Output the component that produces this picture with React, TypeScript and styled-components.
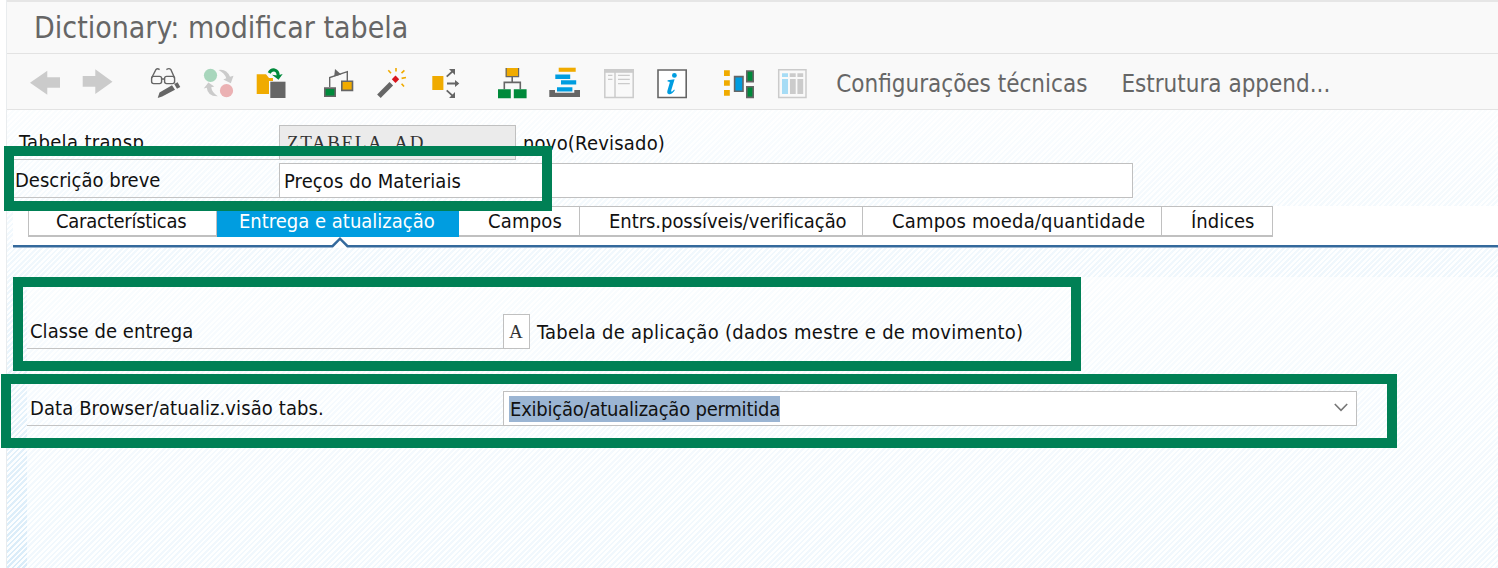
import React from 'react';
import styled, { createGlobalStyle, css } from 'styled-components';

const GlobalStyle = createGlobalStyle`
  * { box-sizing: border-box; }
  body { margin: 0; background: #fff; overflow: hidden; }
`;

const Screen = styled.div`
  position: relative;
  width: 1498px;
  height: 568px;
  padding-left: 6px;
  overflow: hidden;
  background: #fff;
  color: #111;
  font: 20px/24px 'DejaVu Sans Condensed', 'DejaVu Sans', sans-serif;
`;

const Window = styled.main`
  display: flex;
  flex-direction: column;
  height: 100%;
  border-left: 1px solid #e9ecee;
`;

const TitleBar = styled.header`
  display: flex;
  align-items: center;
  height: 54px;
  padding-left: 27px;
  border-top: 2px solid #e6e6e6;
  border-bottom: 1px solid #e3e3e3;
  background: #f9f9f9;
`;

const Title = styled.h1`
  margin: 0;
  color: #666;
  font-size: 30px;
  font-weight: normal;
  line-height: 36px;
`;

const Toolbar = styled.nav`
  display: flex;
  align-items: center;
  height: 56px;
  padding: 5px 0 0 22px;
  border-bottom: 1px solid #e3e3e3;
  background: #f9f9f9;
`;

const IconGroup = styled.div<{ $gap?: number; $after: number }>`
  display: flex;
  gap: ${p => p.$gap ?? 21}px;
  margin-right: ${p => p.$after}px;
`;

const Icon = styled.svg`
  display: block;
  width: 32px;
  height: 32px;
  margin-top: -3px;
`;

const ToolbarText = styled.button`
  margin-right: 22px;
  padding: 0 0 0 12px;
  border: 0;
  background: none;
  color: #666;
  font: inherit;
  font-size: 24px;
  line-height: 30px;
  white-space: nowrap;
`;

const Body = styled.section`
  flex: 1;
  display: flex;
  flex-direction: column;
  background:
    linear-gradient(to bottom, rgba(255, 255, 255, 0.88) 0%, rgba(255, 255, 255, 0.62) 32%, rgba(255, 255, 255, 0) 100%),
    repeating-linear-gradient(135deg, #d9ecf9 0 1.9px, #fcfeff 1.9px 3.8px);
`;

const HeaderFields = styled.div`
  display: flex;
  flex-direction: column;
  gap: 3px;
  padding: 15px 0 0 7px;
`;

const FieldRow = styled.div`
  display: flex;
  align-items: center;
  height: 35px;
`;

const Label = styled.label<{ $width: number; $indent?: number; $track?: number }>`
  display: flex;
  align-items: center;
  width: ${p => p.$width}px;
  height: 100%;
  padding-left: ${p => p.$indent ?? 3}px;
  border-bottom: 1px solid #c4c4c4;
  letter-spacing: ${p => p.$track ?? 0}px;
  white-space: nowrap;
`;

const boxed = css`
  display: flex;
  align-items: center;
  height: 100%;
  border: 1px solid #c0c0c0;
  background: #fff;
  white-space: nowrap;
`;

const TextField = styled.div<{ $width: number }>`
  ${boxed}
  width: ${p => p.$width}px;
  padding-left: 4px;
  letter-spacing: 0.1px;
`;

const CodeField = styled(TextField)<{ $readOnly?: boolean }>`
  padding-left: ${p => (p.$readOnly ? 7 : 5)}px;
  background: ${p => (p.$readOnly ? '#ebebeb' : '#fff')};
  color: #333;
  font-family: 'Liberation Serif', serif;
  font-size: 19px;
  letter-spacing: 1.6px;
`;

const Note = styled.span<{ $track: number }>`
  margin-left: 7px;
  letter-spacing: ${p => p.$track}px;
  white-space: nowrap;
`;

const TabArea = styled.div`
  display: flex;
  flex-direction: column;
  height: 42px;
  margin: 8px 0 0 6px;
  background: #fff;
`;

const TabList = styled.div`
  display: flex;
  width: 1245px;
  height: 31px;
  margin-left: 15px;
  border: 1px solid #c0c0c0;
  border-bottom-width: 2px;
`;

const Tab = styled.button<{ $width: number; $active?: boolean; $track?: number; $indent?: number }>`
  flex: none;
  width: ${p => p.$width}px;
  height: ${p => (p.$active ? 31 : 28)}px;
  margin-top: ${p => (p.$active ? -1 : 0)}px;
  padding: 0 0 ${p => (p.$active ? 2 : 0)}px ${p => p.$indent ?? 29}px;
  border: 0;
  border-right: ${p => (p.$active ? 0 : 1)}px solid #c0c0c0;
  background: ${p => (p.$active ? '#009de0' : '#fff')};
  color: ${p => (p.$active ? '#fff' : '#111')};
  font: inherit;
  letter-spacing: ${p => p.$track ?? 0}px;
  text-align: left;
  white-space: nowrap;

  &:last-child { border-right: 0; }
`;

const TabRule = styled.svg`
  display: block;
  flex: none;
  width: 1485px;
  height: 12px;
  margin-top: -1px;
`;

const Panel = styled.div`
  flex: 1;
  display: flex;
  flex-direction: column;
  gap: 42px;
  margin: 29px 0 0 20px;
  padding-top: 37px;
  background: rgba(255, 255, 255, 0.62);
`;

const Select = styled.div`
  ${boxed}
  justify-content: space-between;
  width: 854px;
  padding: 0 8px 0 5px;
`;

const Selected = styled.span`
  height: 26px;
  padding: 0 0 0 1px;
  background: #9bb5d3;
  line-height: 26px;
  letter-spacing: -0.22px;
`;

const Chevron = styled.svg`
  width: 14px;
  height: 9px;
  margin-top: -3px;
`;

/* Marker frames laid over the form */
const Frame = styled.div<{ $x: number; $y: number; $w: number; $h: number }>`
  position: absolute;
  left: ${p => p.$x}px;
  top: ${p => p.$y}px;
  width: ${p => p.$w}px;
  height: ${p => p.$h}px;
  border: 10.5px solid #008055;
  pointer-events: none;
`;

const GRAY = '#666';
const PALE = '#cbcbcb';
const ORANGE = '#f0ab00';
const GREEN = '#008a3b';
const BLUE = '#009de0';

const BackIcon = () => (
  <Icon viewBox="0 0 32 32"><path fill={PALE} d="M1 15.7 18.3 3.7V10.3H31V20.7H18.3V27.7z" /></Icon>
);

const ForwardIcon = () => (
  <Icon viewBox="0 0 32 32"><path fill={PALE} d="M30.5 14.7 13.3 2.3V9H.7V19.7H13.3V27z" /></Icon>
);

const DisplayChangeIcon = () => (
  <Icon viewBox="0 0 32 32" fill="none" stroke={GRAY}>
    <g strokeWidth="1.4">
      <rect x="2.6" y="9.4" width="10" height="7.2" rx="2" />
      <rect x="15.6" y="9.4" width="10" height="7.2" rx="2" />
      <path d="M12.6 12h3M2.6 11 7 2.4Q8.5.8 10.6 2.6M25.6 11 21.8 2.4Q20 .8 17.4 2.6" />
    </g>
    <path fill={GRAY} stroke="none" d="M8.7 31 10.5 25.6 23 18.3 26 22.8 13.2 29.6zM25.2 17 28.6 15.2 31.3 20 28 21.7z" />
  </Icon>
);

const ActivateIcon = () => (
  <Icon viewBox="0 0 32 32">
    <circle cx="8.5" cy="8.3" r="6.6" fill="#a8d6bc" />
    <circle cx="24.5" cy="23.7" r="6.6" fill="#ebb1b3" />
    <path fill={PALE} d="M16.5 3Q24.5 1.5 28 9.8L31.5 8.8 28.8 16.3 21.3 12.4 24.3 11.2Q22.5 6 16.5 3zM15.8 29.2Q5.5 29.5 4.8 20.8L1.7 21.4 6.4 15.5 12.3 19.4 9.2 20.2Q10 25.5 15.8 29.2z" />
  </Icon>
);

const CopyIcon = () => (
  <Icon viewBox="0 0 32 32">
    <path fill={ORANGE} d="M1.7 7.3H11L14 11H18V14H14V27H1.7z" />
    <path fill={GRAY} d="M15.3 14.7H30.5V31H15.3z" />
    <path fill="none" stroke={GREEN} strokeWidth="3.2" d="M14.2 6Q16 2.5 19.5 3 23.2 3.8 23.2 9" />
    <path fill={GREEN} d="M17 7.8 22.5 8.4 27.7 7 23.5 12.8z" />
  </Icon>
);

const WhereUsedIcon = () => (
  <Icon viewBox="0 0 32 32">
    <path fill="none" stroke={GRAY} strokeWidth="1.4" d="M6.7 20V10.5L24.3 4.6V14" />
    <path fill={GRAY} d="M12 2 18.2 7.5 11.2 9.5z" />
    <path fill={GREEN} stroke={GRAY} strokeWidth="1.6" d="M1.8 21.1H12.2V29.3H1.8z" />
    <path fill={ORANGE} stroke={GRAY} strokeWidth="1.6" d="M18.8 14.2H29.5V23.4H18.8z" />
  </Icon>
);

const WandIcon = () => (
  <Icon viewBox="0 0 32 32">
    <path stroke={GRAY} strokeWidth="5" d="M2.9 29.3 15.3 16.8" />
    <path fill="#d9151c" d="M19.5 8.6 23.2 12.3 19.5 16 15.8 12.3z" />
    <path fill="none" stroke={ORANGE} strokeWidth="1.6" d="M20 1V4.5M12.3 3.3 15 6.2M28.4 3.4 25.5 6.2M25.6 11.4 30 10.5M25.6 16.7 28 19.6" />
  </Icon>
);

const SplitIcon = () => (
  <Icon viewBox="0 0 32 32">
    <path fill={ORANGE} d="M3.3 9H14.4V23H3.3z" />
    <path fill="none" stroke={GRAY} strokeWidth="1.8" d="M17.7 9.7 24.5 3.5M18 16.5H29M17.7 23.3 24.5 29.7" />
    <path fill={GRAY} d="M20 2H26V8zM26 13 30.3 16.5 26 20zM26 25V31H20z" />
  </Icon>
);

const HierarchyIcon = () => (
  <Icon viewBox="0 0 32 32">
    <path fill="none" stroke={GRAY} strokeWidth="1.6" d="M16.2 10V15.4M8.3 22.3V15.4H24.3V22.3" />
    <path fill={ORANGE} d="M9.8 1H22.8V10H9.8z" />
    <path fill="none" stroke={GRAY} strokeWidth="1.2" d="M10.2 1V9.6H22.6V1" />
    <path fill={GREEN} d="M2 22.3H14.8V31.3H2zM17.8 22.3H30.6V31.3H17.8z" />
  </Icon>
);

const StackIcon = () => (
  <Icon viewBox="0 0 32 32">
    <path fill={ORANGE} d="M9.7.7H26.7V4.8H9.7z" />
    <path fill={BLUE} d="M6.3 7.6H21.2V11.9H6.3zM12 13.3H27.2V17.5H12zM8 20.2H23.4V24.6H8z" />
    <path fill={GRAY} d="M.3 23H6V25.7H25.3V23H31V30H.3z" />
  </Icon>
);

const FieldLabelsIcon = () => (
  <Icon viewBox="0 0 32 32" fill="none" stroke={PALE}>
    <path strokeWidth="1.5" d="M1.8 2.7H30.2V30.6H1.8zM12 5V30.5" />
    <path fill={PALE} stroke="none" d="M1 2H31V5.8H1z" />
    <path strokeWidth="1.2" d="M5 8.4H9.4M5 12.4H9.4M15 8.4H26.8M15 12.4H26.8M15 16.6H26.8" />
  </Icon>
);

const InfoIcon = () => (
  <Icon viewBox="0 0 32 32">
    <path fill="#fff" stroke={GRAY} strokeWidth="1.6" d="M2 3H30.2V30.5H2z" />
    <circle cx="18.4" cy="8.4" r="2.4" fill={BLUE} />
    <path fill={BLUE} d="M11.6 13.2 18.6 12.2 15.2 23.6Q15 25.2 16.2 24.6L18.2 22.6 18.8 23.2Q16 27.6 13 27.3 10.7 26.8 11.4 23.8L13.8 15.6Q14 14.4 11.6 14.4z" />
  </Icon>
);

const AppendIcon = () => (
  <Icon viewBox="0 0 32 32">
    <path fill={ORANGE} d="M2 3.3H7.8V9H2zM2 13.2H7.8V18.8H2zM2 23H7.8V28.7H2z" />
    <path fill={BLUE} stroke={GRAY} strokeWidth="1.6" d="M12.6 9.6H21V24.2H12.6z" />
    <path fill={GREEN} stroke={GRAY} strokeWidth="1.6" d="M24.8 4H31.2V14.6H24.8zM24.8 19.8H31.2V30.4H24.8z" />
  </Icon>
);

const ColumnsIcon = () => (
  <Icon viewBox="0 0 32 32">
    <path fill="none" stroke={PALE} strokeWidth="1.5" d="M2.7 2.7H30V30.6H2.7z" />
    <path fill="#a6dcf5" d="M6 6.2H12V10H6zM6 12H12V27H6z" />
    <path fill={PALE} d="M13.7 6.2H19.7V10H13.7zM14 12H19.7V27H14zM21.4 6.2H27.2V10H21.4zM21.4 12H27.2V27H21.4z" />
  </Icon>
);

export default function App() {
  return (
    <>
      <GlobalStyle />
      <Screen>
        <Window>
          <TitleBar><Title>Dictionary: modificar tabela</Title></TitleBar>
          <Toolbar>
            <IconGroup $after={35}><BackIcon /><ForwardIcon /></IconGroup>
            <IconGroup $after={36}><DisplayChangeIcon /><ActivateIcon /><CopyIcon /></IconGroup>
            <IconGroup $after={35}><WhereUsedIcon /><WandIcon /><SplitIcon /></IconGroup>
            <IconGroup $gap={21.4} $after={34}><HierarchyIcon /><StackIcon /><FieldLabelsIcon /><InfoIcon /></IconGroup>
            <IconGroup $gap={22} $after={16}><AppendIcon /><ColumnsIcon /></IconGroup>
            <ToolbarText>Configurações técnicas</ToolbarText>
            <ToolbarText>Estrutura append...</ToolbarText>
          </Toolbar>
          <Body>
            <HeaderFields>
              <FieldRow>
                <Label $width={265} $indent={5} $track={0.35}>Tabela transp.</Label>
                <CodeField $width={237} $readOnly>ZTABELA_AD</CodeField>
                <Note $track={0.2}>novo(Revisado)</Note>
              </FieldRow>
              <FieldRow>
                <Label $width={265} $indent={1}>Descrição breve</Label>
                <TextField $width={854}>Preços do Materiais</TextField>
              </FieldRow>
            </HeaderFields>
            <TabArea>
              <TabList role="tablist">
                <Tab $width={188} $indent={27} $track={-0.25}>Características</Tab>
                <Tab $width={242} $indent={22} $active>Entrega e atualização</Tab>
                <Tab $width={121} $indent={29} $track={0.2}>Campos</Tab>
                <Tab $width={283} $track={-0.05}>Entrs.possíveis/verificação</Tab>
                <Tab $width={299} $track={0.18}>Campos moeda/quantidade</Tab>
                <Tab $width={110}>Índices</Tab>
              </TabList>
              <TabRule viewBox="0 0 1485 12">
                <path fill="none" stroke="#34699c" strokeWidth="2.4" d="M0 10.2H319.5L327 2.6 334.5 10.2H1485" />
              </TabRule>
            </TabArea>
            <Panel>
              <FieldRow>
                <Label $width={476} $track={0.05}>Classe de entrega</Label>
                <CodeField $width={27}>A</CodeField>
                <Note $track={0.29}>Tabela de aplicação (dados mestre e de movimento)</Note>
              </FieldRow>
              <FieldRow>
                <Label $width={476} $track={0.1}>Data Browser/atualiz.visão tabs.</Label>
                <Select>
                  <Selected>Exibição/atualização permitida</Selected>
                  <Chevron viewBox="0 0 14 9"><path fill="none" stroke="#777" strokeWidth="1.6" d="M.8 1 7 7.4 13.2 1" /></Chevron>
                </Select>
              </FieldRow>
            </Panel>
          </Body>
        </Window>
        <Frame $x={4} $y={146} $w={548} $h={65} />
        <Frame $x={13} $y={277} $w={1068} $h={94} />
        <Frame $x={1} $y={374} $w={1396} $h={74} />
      </Screen>
    </>
  );
}
